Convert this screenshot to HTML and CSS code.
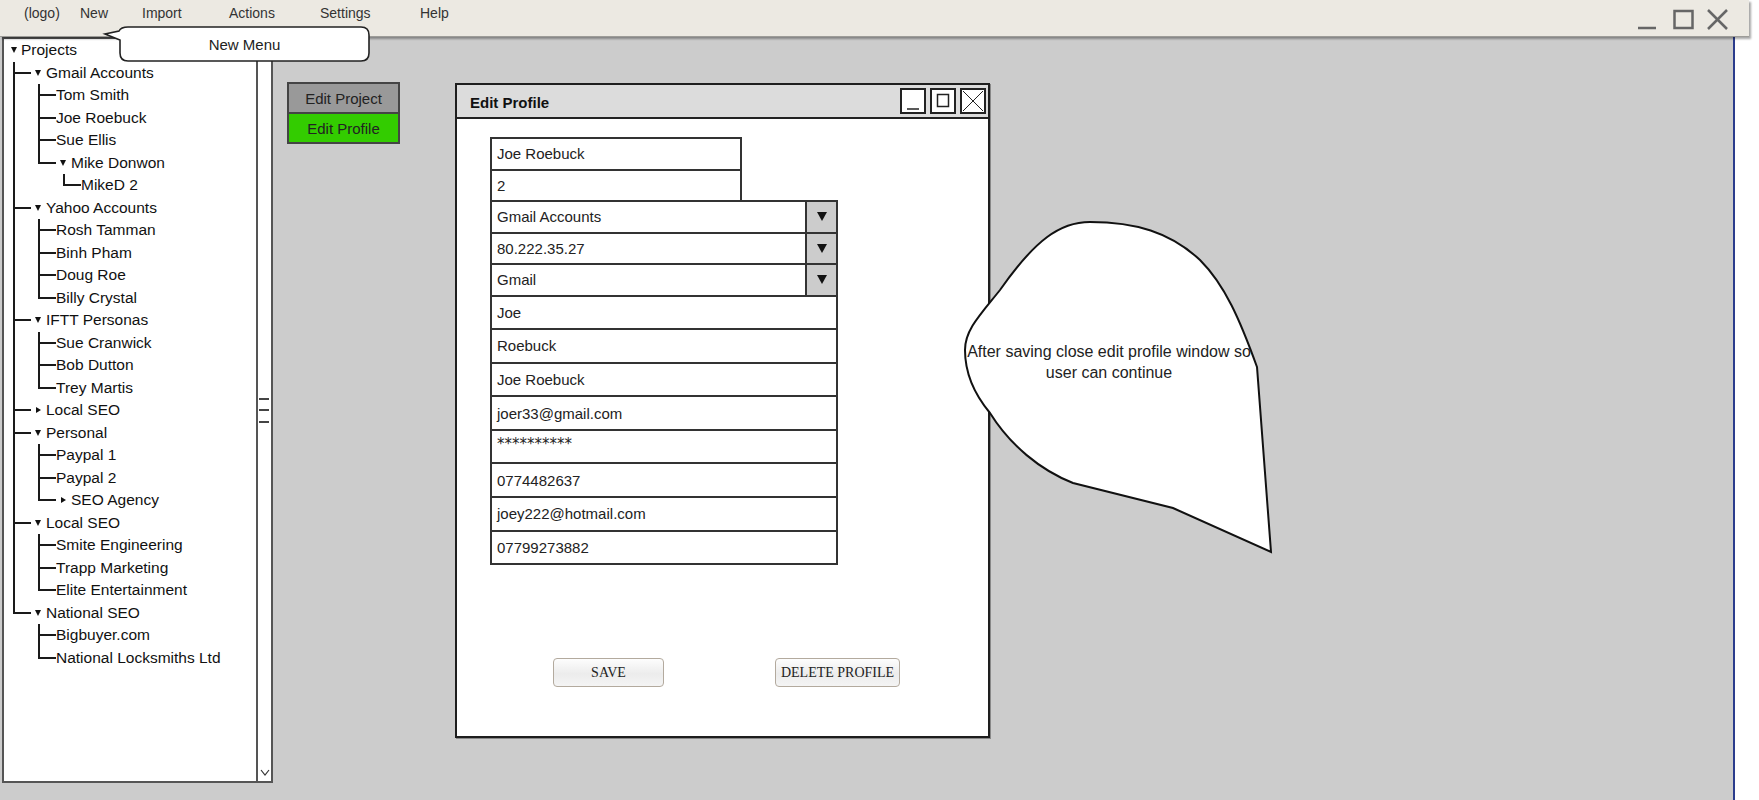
FILE: index.html
```html
<!DOCTYPE html>
<html lang="en">
<head>
<meta charset="utf-8">
<title>Edit Profile mockup</title>
<link rel="stylesheet" href="styles.css">
</head>
<body>
<div class="app">
  <header class="topbar">
    <nav class="menu">
      <span class="m m-logo">(logo)</span>
      <span class="m m-new">New</span>
      <span class="m m-import">Import</span>
      <span class="m m-actions">Actions</span>
      <span class="m m-settings">Settings</span>
      <span class="m m-help">Help</span>
    </nav>
    <svg class="winctl" width="94" height="36" viewBox="0 0 94 36">
      <line x1="2" y1="28" x2="20" y2="28" stroke="#666" stroke-width="2.5"/>
      <rect x="38.5" y="11" width="18" height="17" fill="none" stroke="#666" stroke-width="2.5"/>
      <line x1="72" y1="10" x2="91" y2="29" stroke="#666" stroke-width="2.5"/>
      <line x1="91" y1="10" x2="72" y2="29" stroke="#666" stroke-width="2.5"/>
    </svg>
  </header>

  <div class="menu-callout">
    <svg class="menu-callout-shape" width="272" height="40" viewBox="0 0 272 40">
      <path d="M28,3 H261 Q269,3 269,11 V29 Q269,37 261,37 H28 Q20,37 20,29 V16 L5,10 L19,7 Q21,3 28,3 Z" fill="#fff" stroke="#222" stroke-width="1.6"/>
    </svg>
    <span class="menu-callout-text">New Menu</span>
  </div>

  <main class="workspace">
    <aside class="panel">
      <div class="tree-area">
        <ul class="tree">
          <li class="root">
            <div class="row"><span class="tog down"></span><span>Projects</span></div>
            <ul class="kids kids-root">
              <li><div class="row"><span class="tog down"></span><span>Gmail Accounts</span></div>
                <ul class="kids">
                  <li><div class="row">Tom Smith</div></li>
                  <li><div class="row">Joe Roebuck</div></li>
                  <li><div class="row">Sue Ellis</div></li>
                  <li><div class="row"><span class="tog down"></span><span>Mike Donwon</span></div>
                    <ul class="kids">
                      <li><div class="row">MikeD 2</div></li>
                    </ul>
                  </li>
                </ul>
              </li>
              <li><div class="row"><span class="tog down"></span><span>Yahoo Accounts</span></div>
                <ul class="kids">
                  <li><div class="row">Rosh Tamman</div></li>
                  <li><div class="row">Binh Pham</div></li>
                  <li><div class="row">Doug Roe</div></li>
                  <li><div class="row">Billy Crystal</div></li>
                </ul>
              </li>
              <li><div class="row"><span class="tog down"></span><span>IFTT Personas</span></div>
                <ul class="kids">
                  <li><div class="row">Sue Cranwick</div></li>
                  <li><div class="row">Bob Dutton</div></li>
                  <li><div class="row">Trey Martis</div></li>
                </ul>
              </li>
              <li><div class="row"><span class="tog right"></span><span>Local SEO</span></div></li>
              <li><div class="row"><span class="tog down"></span><span>Personal</span></div>
                <ul class="kids">
                  <li><div class="row">Paypal 1</div></li>
                  <li><div class="row">Paypal 2</div></li>
                  <li><div class="row"><span class="tog right"></span><span>SEO Agency</span></div></li>
                </ul>
              </li>
              <li><div class="row"><span class="tog down"></span><span>Local SEO</span></div>
                <ul class="kids">
                  <li><div class="row">Smite Engineering</div></li>
                  <li><div class="row">Trapp Marketing</div></li>
                  <li><div class="row">Elite Entertainment</div></li>
                </ul>
              </li>
              <li><div class="row"><span class="tog down"></span><span>National SEO</span></div>
                <ul class="kids">
                  <li><div class="row">Bigbuyer.com</div></li>
                  <li><div class="row">National Locksmiths Ltd</div></li>
                </ul>
              </li>
            </ul>
          </li>
        </ul>
      </div>
      <div class="scrollbar">
        <span class="grip g1"></span>
        <span class="grip g2"></span>
        <span class="grip g3"></span>
        <svg class="chev" width="10" height="7" viewBox="0 0 10 7"><polyline points="1,1 5,6 9,1" fill="none" stroke="#333" stroke-width="1.2"/></svg>
      </div>
    </aside>

    <div class="tabs">
      <div class="tab tab-project">Edit Project</div>
      <div class="tab tab-profile">Edit Profile</div>
    </div>

    <section class="window">
      <div class="titlebar">
        <span class="title">Edit Profile</span>
        <div class="tb-btns">
          <span class="tb-btn"><svg width="22" height="22" viewBox="0 0 22 22"><line x1="5" y1="19" x2="17" y2="19" stroke="#222" stroke-width="1.5"/></svg></span>
          <span class="tb-btn"><svg width="22" height="22" viewBox="0 0 22 22"><rect x="5.5" y="4.5" width="11" height="12" fill="none" stroke="#222" stroke-width="1.5"/></svg></span>
          <span class="tb-btn"><svg width="22" height="22" viewBox="0 0 22 22"><line x1="1" y1="1" x2="21" y2="21" stroke="#222" stroke-width="1"/><line x1="21" y1="1" x2="1" y2="21" stroke="#222" stroke-width="1"/></svg></span>
        </div>
      </div>
      <div class="form">
        <div class="field short">Joe Roebuck</div>
        <div class="field short">2</div>
        <div class="field select"><span>Gmail Accounts</span><span class="arrow"><span class="arrow-tri"></span></span></div>
        <div class="field select"><span>80.222.35.27</span><span class="arrow"><span class="arrow-tri"></span></span></div>
        <div class="field select"><span>Gmail</span><span class="arrow"><span class="arrow-tri"></span></span></div>
        <div class="field">Joe</div>
        <div class="field">Roebuck</div>
        <div class="field">Joe Roebuck</div>
        <div class="field">joer33@gmail.com</div>
        <div class="field pw">**********</div>
        <div class="field">0774482637</div>
        <div class="field">joey222@hotmail.com</div>
        <div class="field">07799273882</div>
        <div class="actions">
          <button class="btn btn-save">SAVE</button>
          <button class="btn btn-del">DELETE PROFILE</button>
        </div>
      </div>
    </section>
  </main>

  <svg class="blob" width="350" height="370" viewBox="0 0 350 370">
    <path d="M317,167 C300,120 285,85 260,60 C230,32 195,22 150,22 C120,22 95,40 60,90 C40,115 25,130 25,150 C25,175 35,195 50,213 C70,245 100,270 133,283 L233,308 L331,352 Z" fill="#fff" stroke="#111" stroke-width="2"/>
  </svg>
  <div class="blob-text">After saving close edit profile window so<br>user can continue</div>
</div>
</body>
</html>
```

FILE: styles.css
```css
html, body {
  margin: 0;
  padding: 0;
}
body {
  background: #ffffff;
  font-family: "Liberation Sans", Arial, sans-serif;
  overflow: hidden;
}
.app {
  position: relative;
  width: 1733px;
  height: 800px;
  background: #cccccc;
  border-right: 2px solid #2b3c8c;
}

/* top bar */
.topbar {
  position: relative;
  z-index: 2;
  display: flex;
  align-items: flex-start;
  width: 1749px;
  height: 36px;
  background: #ece9e2;
  border-bottom: 1px solid #9d9c98;
  box-shadow: 2px 2px 2px rgba(0, 0, 0, 0.35);
}
.menu {
  display: flex;
  align-items: center;
  height: 25px;
  padding-left: 24px;
  font-size: 14px;
  color: #333;
}
.m-logo { width: 56px; }
.m-new { width: 62px; }
.m-import { width: 87px; }
.m-actions { width: 91px; }
.m-settings { width: 100px; }
.winctl {
  margin-left: auto;
  margin-right: 19px;
}

/* new menu callout */
.menu-callout {
  position: absolute;
  z-index: 3;
  left: 100px;
  top: 24px;
  width: 272px;
  height: 40px;
}
.menu-callout-shape {
  display: block;
}
.menu-callout-text {
  position: absolute;
  left: 20px;
  top: 3px;
  width: 249px;
  height: 34px;
  display: flex;
  align-items: center;
  justify-content: center;
  font-size: 15px;
  color: #222;
}

/* workspace */
.workspace {
  display: flex;
  align-items: flex-start;
  padding-left: 2px;
}

/* tree panel */
.panel {
  display: flex;
  width: 271px;
  height: 746px;
  box-sizing: border-box;
  border: 2px solid #555;
  background: #fff;
}
.tree-area {
  flex: 1;
  overflow: hidden;
}
.tree, .kids {
  list-style: none;
  margin: 0;
  padding: 0;
}
.row {
  display: flex;
  align-items: center;
  height: 22.5px;
  font-size: 15.5px;
  color: #111;
  white-space: nowrap;
}
.tog {
  flex: none;
  width: 0;
  height: 0;
  margin-left: 4px;
  margin-right: 5px;
}
.tog.down {
  border-left: 3px solid transparent;
  border-right: 3px solid transparent;
  border-top: 6px solid #111;
}
.tog.right {
  margin-left: 5px;
  border-top: 3px solid transparent;
  border-bottom: 3px solid transparent;
  border-left: 5px solid #111;
}
.root > .row .tog {
  margin-left: 7px;
  margin-right: 4px;
}
.kids {
  margin-left: 7px;
}
.kids-root {
  margin-left: 9px;
}
.kids > li {
  position: relative;
  padding-left: 18px;
}
.kids > li::before {
  content: "";
  position: absolute;
  left: 0;
  top: 0;
  width: 16px;
  height: 10px;
  border-left: 2px solid #1a1a1a;
  border-bottom: 2px solid #1a1a1a;
}
.kids > li:not(:last-child)::after {
  content: "";
  position: absolute;
  left: 0;
  top: 0;
  bottom: 0;
  border-left: 2px solid #1a1a1a;
}

/* scrollbar */
.scrollbar {
  width: 13px;
  border-left: 2px solid #555;
  display: flex;
  flex-direction: column;
  align-items: flex-start;
}
.grip {
  display: block;
  width: 10px;
  height: 2px;
  margin-left: 1px;
  background: #444;
}
.g1 { margin-top: 359px; }
.g2 { margin-top: 9px; }
.g3 { margin-top: 10px; }
.chev {
  margin-top: auto;
  margin-bottom: 5px;
  margin-left: 2px;
}

/* side tabs */
.tabs {
  margin-left: 14px;
  margin-top: 45px;
  width: 113px;
  box-sizing: border-box;
  border: 2px solid #444;
}
.tab {
  height: 28px;
  display: flex;
  align-items: center;
  justify-content: center;
  font-size: 15px;
  color: #222;
}
.tab-project {
  background: #999999;
  border-bottom: 2px solid #444;
}
.tab-profile {
  background: #33cc00;
}

/* edit profile window */
.window {
  margin-left: 55px;
  margin-top: 46px;
  width: 535px;
  height: 655px;
  box-sizing: border-box;
  border: 2px solid #1e1e1e;
  background: #fff;
  box-shadow: 1px 1px 0 #888;
  display: flex;
  flex-direction: column;
}
.titlebar {
  display: flex;
  align-items: center;
  height: 32px;
  padding-left: 13px;
  background: #dcdcdc;
  border-bottom: 2px solid #222;
}
.title {
  font-weight: bold;
  font-size: 15px;
  color: #111;
  padding-top: 2px;
}
.tb-btns {
  display: flex;
  gap: 4px;
  margin-left: auto;
  margin-right: 2px;
}
.tb-btn {
  display: block;
  width: 26px;
  height: 26px;
  box-sizing: border-box;
  border: 2px solid #222;
  background: #fff;
}
.tb-btn svg {
  display: block;
}
.form {
  display: flex;
  flex-direction: column;
  align-items: flex-start;
  padding: 18px 0 0 33px;
}
.field {
  box-sizing: border-box;
  display: flex;
  align-items: center;
  width: 348px;
  height: 35.6px;
  margin-top: -2px;
  padding-left: 5px;
  border: 2px solid #333;
  font-size: 15px;
  color: #222;
  white-space: nowrap;
}
.field:first-child {
  margin-top: 0;
}
.field.short {
  width: 252px;
  height: 33.5px;
}
.field.select {
  height: 33.5px;
}
.field.pw {
  font-family: "DejaVu Sans", sans-serif;
  font-size: 15px;
  align-items: flex-start;
  padding-top: 4px;
}
.arrow {
  display: flex;
  align-items: center;
  justify-content: center;
  margin-left: auto;
  width: 29px;
  height: 100%;
  background: #cccccc;
  border-left: 2px solid #333;
}
.arrow-tri {
  width: 0;
  height: 0;
  border-left: 5px solid transparent;
  border-right: 5px solid transparent;
  border-top: 9px solid #111;
}
.actions {
  display: flex;
  gap: 111px;
  margin-top: 93px;
  margin-left: 63px;
}
.btn {
  height: 29px;
  box-sizing: border-box;
  padding: 0;
  border: 1px solid #b3aa9e;
  border-radius: 4px;
  background: linear-gradient(#fdfdfd, #ececec 55%, #f4f4f4);
  font-family: "Liberation Serif", "Times New Roman", serif;
  font-size: 14px;
  color: #222;
}
.btn-save { width: 111px; }
.btn-del { width: 125px; }

/* annotation blob */
.blob {
  position: absolute;
  left: 940px;
  top: 200px;
}
.blob-text {
  position: absolute;
  left: 948px;
  top: 341px;
  width: 322px;
  text-align: center;
  font-size: 16px;
  line-height: 21px;
  color: #222;
}
```
